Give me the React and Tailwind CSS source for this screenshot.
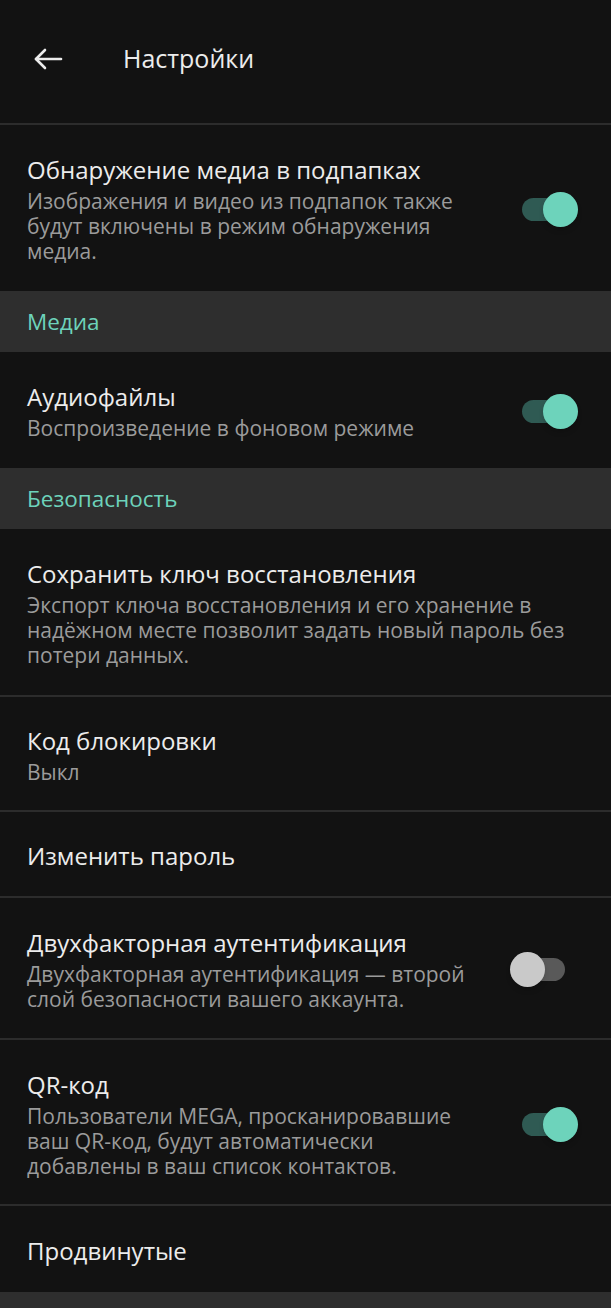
import React from 'react';

const Toggle = ({ on }) => (
  <div className="relative w-[68px] h-[35px] shrink-0">
    <div
      className={`absolute left-[12px] right-[13px] top-[6px] h-[23px] rounded-full ${
        on ? 'bg-[#2f5a53]' : 'bg-[#595959]'
      }`}
    ></div>
    <div
      className={`absolute top-0 w-[35px] h-[35px] rounded-full shadow-md ${
        on ? 'right-0 bg-[#6dd3bb]' : 'left-0 bg-[#c9c9c9]'
      }`}
    ></div>
  </div>
);

const Item = ({ title, sub, toggle, divider, py = 'pt-[29px] pb-[27px]' }) => (
  <div className={divider ? 'border-b-2 border-[#2c2c2c]' : ''}>
    <div className={`flex items-center pl-[27px] pr-[33px] ${py}`}>
      <div className="flex-1 min-w-0">
        <div className="text-[24px] leading-[32px] text-[#ececec]">{title}</div>
        {sub && <div className="mt-[3px] text-[21px] leading-[25px] text-[#9b9b9b]">{sub}</div>}
      </div>
      {toggle !== undefined && (
        <div className="ml-[30px]">
          <Toggle on={toggle} />
        </div>
      )}
    </div>
  </div>
);

const Section = ({ label }) => (
  <div className="h-[61px] flex items-center pl-[27px] bg-[#2e2e2e]">
    <span className="text-[22.5px] text-[#6dd3bb]">{label}</span>
  </div>
);

export default function App() {
  return (
    <div className="w-[611px] h-[1308px] overflow-hidden bg-[#121212] font-['Open_Sans',sans-serif]">
      {/* header */}
      <div className="h-[125px] flex items-center pb-[6px] border-b-2 border-[#2c2c2c]">
        <div className="w-[123px] pl-[33px]">
          <svg width="30" height="22" viewBox="0 0 30 22" fill="none" stroke="#ececec" strokeWidth="2.6" strokeLinecap="round" strokeLinejoin="round">
            <path d="M28 11H3" />
            <path d="M12 2L3 11l9 9" />
          </svg>
        </div>
        <span className="text-[25px] text-[#ececec]">Настройки</span>
      </div>

      <Item
        title="Обнаружение медиа в подпапках"
        sub="Изображения и видео из подпапок также будут включены в режим обнаружения медиа."
        toggle={true}
      />

      <Section label="Медиа" />

      <Item title="Аудиофайлы" sub="Воспроизведение в фоновом режиме" toggle={true} />

      <Section label="Безопасность" />

      <Item
        title="Сохранить ключ восстановления"
        sub="Экспорт ключа восстановления и его хранение в надёжном месте позволит задать новый пароль без потери данных."
        divider
      />
      <Item title="Код блокировки" sub="Выкл" divider py="pt-[28px] pb-[25px]" />
      <Item title="Изменить пароль" divider py="pt-[28px] pb-[24px]" />
      <Item
        title="Двухфакторная аутентификация"
        sub="Двухфакторная аутентификация — второй слой безопасности вашего аккаунта."
        toggle={false}
        divider
        py="pt-[29px] pb-[26px]"
      />
      <Item
        title="QR-код"
        sub="Пользователи MEGA, просканировавшие ваш QR-код, будут автоматически добавлены в ваш список контактов."
        toggle={true}
        divider
        py="pt-[29px] pb-[25px]"
      />
      <Item title="Продвинутые" py="pt-[29px] pb-[25px]" />

      <div className="h-[20px] bg-[#2e2e2e]"></div>
    </div>
  );
}
